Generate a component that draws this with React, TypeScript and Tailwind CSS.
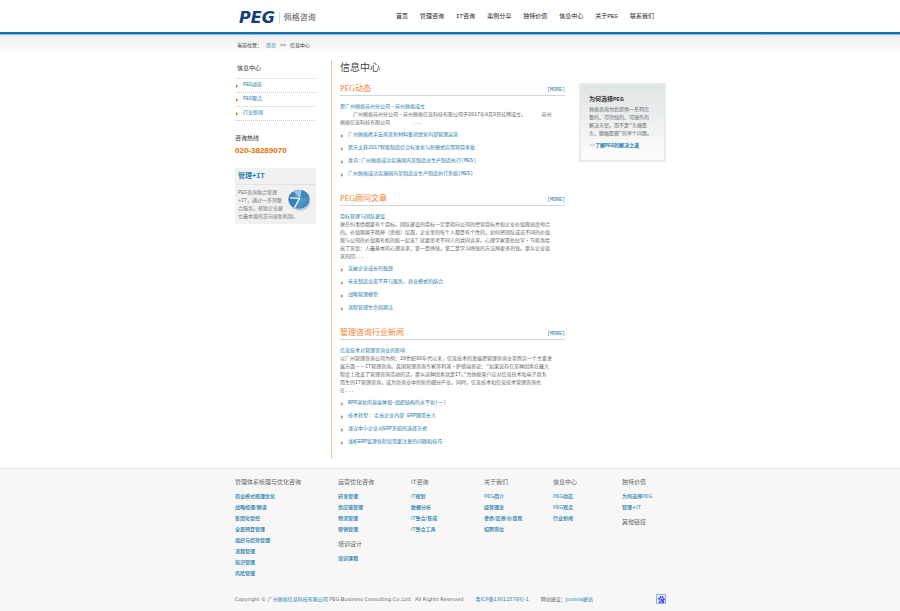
import { SiBaidu } from "react-icons/si";

const nav = ["首页", "管理咨询", "IT咨询", "案例分享", "独特价值", "信息中心", "关于PEG", "联系我们"];

const sideLinks = ["PEG动态", "PEG观点", "行业新闻"];

const sections = [
  {
    title: "PEG动态",
    lead: "贺广州佩格苏州分公司－苏州佩格成立",
    body: [
      "\u3000\u3000 广州佩格苏州分公司－苏州佩格信息科技有限公司于2017年8月9日挂牌成立。\u3000\u3000\u3000 苏州",
      "佩格信息科技有限公司\u3000\u3000\u3000\u3000 ...",
    ],
    links: [
      "广州佩格携手云南某新材料集团优化内部管理运营",
      "贺方太获2017智能制造综合标准化与新模式应用项目审批",
      "喜讯:广州佩格成功实施国内某制造业生产制造执行(MES)",
      "广州佩格成功实施国内某制造业生产制造执行系统(MES)",
    ],
  },
  {
    title: "PEG顾问文章",
    lead: "目标管理与团队建设",
    body: [
      "做任何事情都要有个目标。团队建设的目标一定是指向公司的经营目标并和企业价值观高度吻合",
      "的。价值观属于精神（思想）层面，企业里的每个人都是有个性的，如何将团队成员不同的价值",
      "观与公司的价值观有机的统一起来？就要思考不同人的共同诉求。心理学家亚伯拉罕・马斯洛给",
      "出了答案：人最基本的心理诉求，第一是挣钱，第二是学习挣钱的方法挣更多的钱。那么企业追",
      "求的回...",
    ],
    links: ["突破企业成长的瓶颈", "未来制造业离不开与服务、商业模式的结合", "战略管理模型", "流程管理生命周期法"],
  },
  {
    title: "管理咨询行业新闻",
    lead: "信息技术对管理咨询业的影响",
    body: [
      "以广州管理咨询公司为例：20世纪90年代以来，信息技术的发展把管理咨询业带到另一个主要发",
      "展方面－－IT管理咨询。英国管理咨询专家菲利浦・萨德瑞普说：“如果说存在某种因素在最大",
      "程度上改变了管理咨询活动的话，那么这种因素就是IT。”为协助客户应对信息技术和电子商务",
      "而生的IT管理咨询，成为咨询业中的新的细分产业，同时，信息技术和信息技术管理咨询也",
      "在...",
    ],
    links: [
      "BPR演化的直接体现-组织结构的水平化(一)",
      "技术转型: 走出企业内部 ERP随需长大",
      "浅议中小企业对ERP系统的选择方式",
      "浅析ERP监理各阶段需要注意的问题和技巧",
    ],
  },
];

const footerColumns = [
  [
    {
      title: "管理体系梳理与优化咨询",
      links: ["商业模式梳理优化", "战略梳理/解读", "集团化管控", "全面预算管理", "组织与绩效管理", "流程管理", "知识管理", "风险管理"],
    },
  ],
  [
    { title: "运营优化咨询", links: ["研发管理", "供应链管理", "物流管理", "营销管理"] },
    { title: "培训设计", links: ["培训课程"] },
  ],
  [{ title: "IT咨询", links: ["IT规划", "数据分析", "IT整合/集成", "IT整合工具"] }],
  [{ title: "关于我们", links: ["PEG简介", "经营理念", "使命/愿景/价值观", "招聘岗位"] }],
  [{ title: "信息中心", links: ["PEG动态", "PEG观点", "行业新闻"] }],
  [
    { title: "独特价值", links: ["为何选择PEG", "管理+IT"] },
    { title: "其他链接", links: [] },
  ],
];

function Arrow({ className }: { className: string }) {
  return (
    <svg viewBox="0 0 3 4" className={`h-[4px] w-[3px] shrink-0 ${className}`} aria-hidden="true">
      <path d="M0 0 2.4 2 0 4Z" fill="currentColor" />
    </svg>
  );
}

function PieChart() {
  return (
    <svg viewBox="0 0 24 24" className="h-6 w-6 shrink-0" aria-hidden="true">
      <defs>
        <linearGradient id="pie" x1="0" y1="0" x2="1" y2="1">
          <stop offset="0" stopColor="#2f6ea5" />
          <stop offset="0.5" stopColor="#5c9fd0" />
          <stop offset="1" stopColor="#3478ad" />
        </linearGradient>
      </defs>
      <ellipse cx="12" cy="12.5" rx="10.5" ry="9.5" fill="#c9ced2" />
      <ellipse cx="11" cy="10.5" rx="11" ry="10" fill="#a9c6de" />
      <ellipse cx="11" cy="10.3" rx="10.4" ry="9.4" fill="url(#pie)" />
      <path d="M11.5 9.5 13 1A10.4 9.4 0 0 0 5.5 2.6Z" fill="#93c4e6" />
      <path d="M11.5 9.5 13 1A10.4 9.4 0 0 1 21.3 9Z" fill="#3f86bd" />
      <path d="M10 10.5 .8 9.5A10.4 9.4 0 0 0 5.5 18.2Z" fill="#3a7fb5" />
      <path d="M2 8.8 11.5 9.5 6.5 18.6" stroke="#f2f8fc" strokeWidth="1.2" fill="none" />
      <path d="M11.5 9.5 13 1" stroke="#dcebf6" strokeWidth="0.7" />
    </svg>
  );
}

function Header() {
  return (
    <header className="border-b-2 border-[#0873b9] bg-white">
      <div className="mx-auto flex h-8 max-w-[432px] items-center justify-between pr-3 pl-[5px]">
        <a href="#" className="flex items-center gap-1 pt-1">
          <span className="font-['DejaVu_Sans',sans-serif] text-[16px] leading-4 font-bold text-[#123f76] italic">PEG</span>
          <span className="border-l border-[#d5dde2] pl-1 text-[8px] leading-3 text-[#555]">佩格咨询</span>
        </a>
        <nav className="flex gap-3 pt-[2px] text-[6px] leading-2">
          {nav.map((item) => (
            <a key={item} href="#">{item}</a>
          ))}
        </nav>
      </div>
    </header>
  );
}

function Sidebar() {
  return (
    <aside className="w-[81px] shrink-0 pt-1">
      <h2 className="pb-[5px] pl-[2px] text-[6px] leading-[9px] text-[#333]">信息中心</h2>
      <ul className="border-t border-dotted border-[#ccc]">
        {sideLinks.map((item) => (
          <li key={item} className="flex h-[14px] items-center gap-1 border-b border-dotted border-[#ccc] pl-px">
            <Arrow className="text-[#ef8a22]" />
            <a href="#">{item}</a>
          </li>
        ))}
      </ul>
      <p className="mt-[14px] text-[6px] leading-2 text-[#333]">咨询热线</p>
      <p className="mt-[3px] font-['Liberation_Sans',sans-serif] text-[8px] leading-[10px] font-bold text-[#e86c00]">020-38289070</p>
      <div className="mt-3 bg-[#f1f1f1] pb-[3px]">
        <h3 className="border-b border-[#dfe4e6] pl-[3px] text-[7px] leading-4 font-bold text-[#2582ac]">管理+IT</h3>
        <div className="pt-1 pr-1 pl-[3px] leading-2 text-[#777]">
          <div className="float-right pl-1">
            <PieChart />
          </div>
          PEG咨询融合管理+IT，通过一系列整合服务，帮助企业建立最本源的正向创新机制。
        </div>
      </div>
    </aside>
  );
}

function Article({ title, lead, body, links }: (typeof sections)[number]) {
  return (
    <section className="mb-[13px] last:mb-[10px]">
      <div className="flex items-end justify-between border-b border-[#cbd9dd] pb-px">
        <h2 className="font-['Liberation_Serif','Noto_Sans_CJK_SC',serif] text-[8px] leading-[10px] text-[#f08030]">{title}</h2>
        <a href="#" className="leading-2">[MORE]</a>
      </div>
      <h3 className="mt-[7px] leading-2">
        <a href="#">{lead}</a>
      </h3>
      <p className="leading-2 whitespace-pre text-[#666]">{body.join("\n")}</p>
      <ul className="mt-[2px]">
        {links.map((item) => (
          <li key={item} className="flex h-[13px] items-center gap-1 pl-px">
            <Arrow className="text-[#a59b90]" />
            <a href="#">{item}</a>
          </li>
        ))}
      </ul>
    </section>
  );
}

function WhyBox() {
  return (
    <aside className="mt-[23px] w-[87px] shrink-0 border-2 border-[#e8ebec] bg-linear-to-b from-[#dfe4e4] to-[#fdfdfd] px-2 pt-[11px] pb-[10px]">
      <h3 className="text-[6px] leading-2 font-bold text-[#333]">为何选择PEG</h3>
      <p className="mt-[2px] leading-2 whitespace-pre text-[#666]">
        {"佩格咨询为您提供一系列完\n整的、可持续的、可操作的\n解决方案，而不是“头痛医\n头、脚痛医脚”的单个问题。"}
      </p>
      <p className="mt-1 leading-2">
        <span className="text-[#999]">&gt;&gt;</span>
        <a href="#" className="font-bold">了解PEG的解决之道</a>
      </p>
    </aside>
  );
}

function Footer() {
  return (
    <footer className="border-t border-[#e4e4e4] bg-[#f7f7f7] font-['DejaVu_Sans','Noto_Sans_CJK_SC',sans-serif] text-[#666]">
      <div className="mx-auto max-w-[432px] pt-2 pb-[7px] pl-px">
        <div className="grid grid-cols-[103fr_73fr_73fr_69fr_69fr_44fr]">
          {footerColumns.map((groups) => (
            <div key={groups[0].title} className="whitespace-nowrap">
              {groups.map((group) => (
                <div key={group.title} className="mb-1">
                  <h4 className="mb-1 text-[6px] leading-[10px]">{group.title}</h4>
                  <ul>
                    {group.links.map((item) => (
                      <li key={item} className="leading-[11px] font-medium">
                        <a href="#">{item}</a>
                      </li>
                    ))}
                  </ul>
                </div>
              ))}
            </div>
          ))}
        </div>
        <div className="mt-[11px] flex items-center justify-between whitespace-nowrap">
          <p className="flex gap-3 leading-2">
            <span>
              Copyright © <a href="#">广州佩格信息科技有限公司</a> PEG Business Consulting Co.,Ltd.&nbsp; All Rights Reserved
            </span>
            <a href="#">粤ICP备13011578号-1</a>
            <span>
              网站建设：<a href="#">Joomla建站</a>
            </span>
          </p>
          <a href="#" aria-label="Baidu" className="flex size-[10px] items-center justify-center border border-[#8fb4e8] bg-[#e3eefb] text-[#2319dc]!">
            <SiBaidu size={7} />
          </a>
        </div>
      </div>
    </footer>
  );
}

export default function App() {
  return (
    <div className="flex min-h-screen flex-col bg-white font-['Liberation_Mono','Noto_Sans_CJK_SC',monospace] text-[5px] [&_a]:text-[#1d7ba8] [&_nav_a]:text-[#222]">
      <Header />
      <div className="flex-1 border-t border-[#7db8dd] bg-[linear-gradient(#ececec,#fff_18px)]">
        <div className="mx-auto max-w-[432px] pb-[9px] pl-px">
          <div className="flex gap-1 pt-[7px] pl-[2px] leading-2 text-[#333]">
            <span>当前位置：</span>
            <a href="#">首页</a>
            <span>&gt;&gt;</span>
            <span>信息中心</span>
          </div>
          <div className="mt-[10px] flex">
            <Sidebar />
            <main className="ml-[15px] min-w-0 flex-1 border-l border-[#f3c6a0] pl-2">
              <h1 className="mb-[7px] pt-px text-[10px] leading-4 text-[#444]">信息中心</h1>
              {sections.map((s) => (
                <Article key={s.title} {...s} />
              ))}
            </main>
            <div className="ml-[14px]">
              <WhyBox />
            </div>
          </div>
        </div>
      </div>
      <Footer />
    </div>
  );
}
